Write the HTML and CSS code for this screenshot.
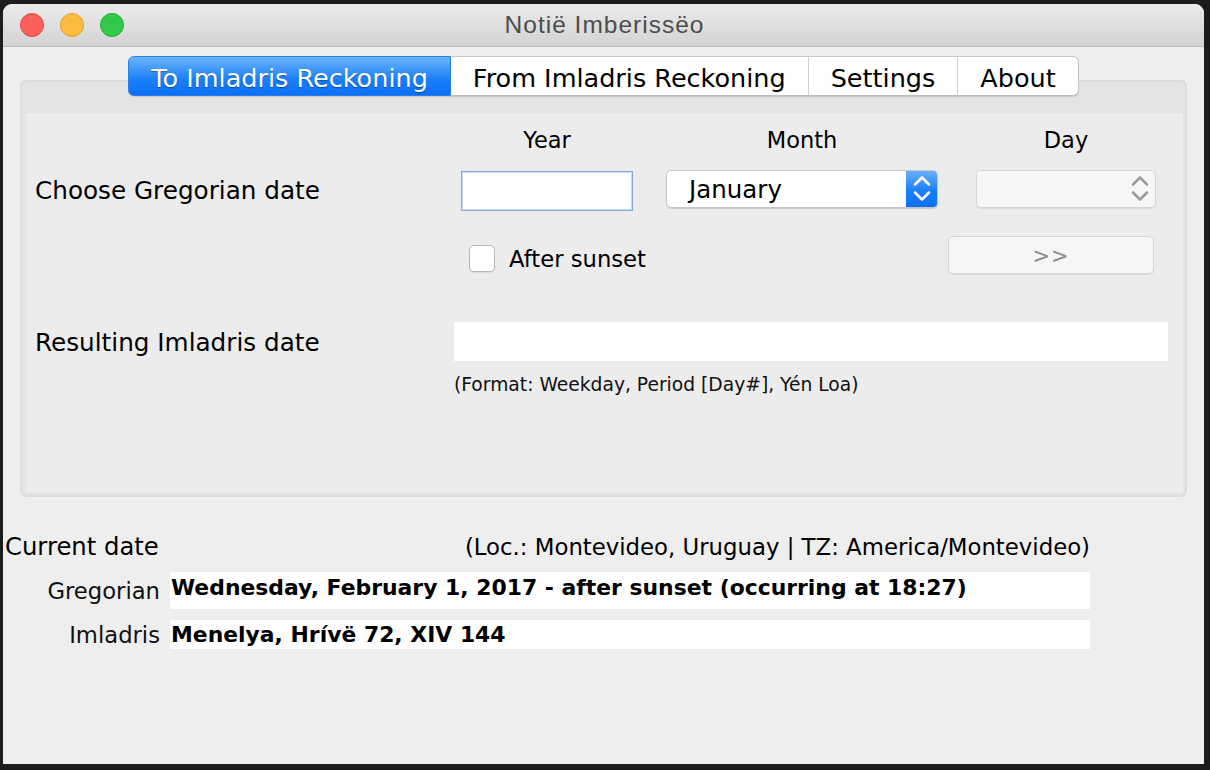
FILE: index.html
```html
<!DOCTYPE html>
<html>
<head>
<meta charset="utf-8">
<title>Notië Imberissëo</title>
<link rel="stylesheet" href="styles.css">
</head>
<body>
<div class="window">
  <div class="titlebar">
    <div class="lights">
      <span class="light red"></span>
      <span class="light yellow"></span>
      <span class="light green"></span>
    </div>
    <div class="title">Notië Imberissëo</div>
    <div></div>
  </div>

  <div class="main">
    <div class="tabs">
      <div class="tab active">To Imladris Reckoning</div>
      <div class="tab">From Imladris Reckoning</div>
      <div class="tab">Settings</div>
      <div class="tab">About</div>
    </div>

    <div class="panel">
      <div class="pane">
        <div class="grid">
          <div></div>
          <div class="head year-w">Year</div>
          <div class="head month-w">Month</div>
          <div class="head day-w">Day</div>

          <div class="label row-label">Choose Gregorian date</div>
          <div class="textfield year-w"></div>
          <div class="combo month-w">
            <span class="combo-text">January</span>
            <span class="combo-arrow blue">
              <svg width="32" height="38" viewBox="0 0 32 38"><path d="M9 14.5 L16 7.5 L23 14.5 M9 22.5 L16 29.5 L23 22.5" fill="none" stroke="#ffffff" stroke-width="2.5" stroke-linecap="round" stroke-linejoin="round"/></svg>
            </span>
          </div>
          <div class="combo day-w disabled">
            <span class="combo-arrow">
              <svg width="32" height="38" viewBox="0 0 32 38"><path d="M9 14.5 L16 7.5 L23 14.5 M9 22.5 L16 29.5 L23 22.5" fill="none" stroke="#9a9a9a" stroke-width="2.5" stroke-linecap="round" stroke-linejoin="round"/></svg>
            </span>
          </div>

          <div></div>
          <div class="check"><span class="box"></span><span>After sunset</span></div>
          <div class="btn">&gt;&gt;</div>
        </div>

        <div class="result-row">
          <div class="label result-label">Resulting Imladris date</div>
          <div class="result-field"></div>
        </div>
        <div class="format">(Format: Weekday, Period [Day#], Yén Loa)</div>
      </div>
    </div>
  </div>

  <div class="current">
    <div class="current-head">
      <span class="current-title">Current date</span>
      <span class="loc">(Loc.: Montevideo, Uruguay | TZ: America/Montevideo)</span>
    </div>
    <div class="cur-row greg">
      <span class="cur-label">Gregorian</span>
      <span class="cur-field">Wednesday, February 1, 2017 - after sunset (occurring at 18:27)</span>
    </div>
    <div class="cur-row imla">
      <span class="cur-label">Imladris</span>
      <span class="cur-field">Menelya, Hrívë 72, XIV 144</span>
    </div>
  </div>
</div>
</body>
</html>
```

FILE: styles.css
```css
* { box-sizing: border-box; }

html, body {
  margin: 0;
  padding: 0;
}

body {
  background: #1c1c1c;
  padding: 4px 0 0 3px;
  width: 1210px;
  height: 770px;
  overflow: hidden;
  font-family: "DejaVu Sans", sans-serif;
  color: #000;
}

.window {
  width: 1201px;
  height: 760px;
  background: #eeeeee;
  border-radius: 9px 9px 0 0;
  overflow: hidden;
  display: flex;
  flex-direction: column;
}

/* Title bar */
.titlebar {
  height: 43px;
  flex: none;
  background: linear-gradient(#ebebeb, #d3d3d3);
  border-bottom: 1px solid #bdbdbd;
  display: grid;
  grid-template-columns: 1fr auto 1fr;
  align-items: center;
}

.lights {
  display: flex;
  gap: 16px;
  padding-left: 17px;
}

.light {
  width: 24px;
  height: 24px;
  border-radius: 50%;
  display: block;
}
.light.red { background: #fc605c; border: 1px solid #e0443e; }
.light.yellow { background: #fdbc40; border: 1px solid #dea123; }
.light.green { background: #34c84a; border: 1px solid #1dad2b; }

.title {
  font-family: "Liberation Sans", sans-serif;
  font-size: 24.5px;
  letter-spacing: 1px;
  color: #4d4d4d;
  padding-left: 2px;
}

/* Tabs + panel */
.main {
  padding: 9px 17px 0 17px;
  flex: none;
}

.tabs {
  display: flex;
  justify-content: center;
  position: relative;
  z-index: 1;
  height: 40px;
  margin-bottom: -16px;
}

.tab {
  height: 40px;
  line-height: 38px;
  padding: 2px 22px 0;
  font-size: 25.5px;
  background: #ffffff;
  border-top: 1px solid #c9c9c9;
  border-bottom: 1px solid #bdbdbd;
  border-right: 1px solid #d4d4d4;
  box-shadow: 0 1px 1px rgba(0, 0, 0, 0.12);
  color: #000;
  white-space: nowrap;
}

.tab:last-child {
  border-right: 1px solid #c4c4c4;
  border-radius: 0 6px 6px 0;
}

.tab.active {
  background: linear-gradient(#6db4fb, #1a7ff8 60%, #0a6ff6);
  color: #ffffff;
  border: 1px solid #2a7fe6;
  border-radius: 6px 0 0 6px;
  text-shadow: 0 1px 1px rgba(0, 0, 0, 0.35);
}

.panel {
  background: #e4e4e4;
  border: 2px solid #dcdcdc;
  border-radius: 6px;
  padding: 31px 2px 2px 4px;
}

.pane {
  background: #ececec;
  height: 380px;
  padding-top: 13px;
}

.grid {
  display: grid;
  grid-template-columns: 435px 205px 310px 180px;
  grid-template-rows: 44px 66px 38px;
}

.year-w { width: 172px; }
.month-w { width: 272px; }
.day-w { width: 180px; }

.head {
  font-size: 22.5px;
  line-height: 28px;
  text-align: center;
  align-self: start;
}

.label {
  font-size: 24.7px;
  white-space: nowrap;
}

.row-label {
  padding-left: 9px;
  line-height: 41px;
  align-self: start;
}

.textfield {
  height: 40px;
  margin-top: 1px;
  background: #ffffff;
  border: 1px solid #7ea9e1;
  box-shadow: inset 0 0 0 1px #c9dcf4;
  align-self: start;
}

.combo {
  height: 38px;
  align-self: start;
  display: flex;
  align-items: center;
  background: #ffffff;
  border: 1px solid #c6c6c6;
  border-radius: 5px;
  box-shadow: 0 1px 1px rgba(0, 0, 0, 0.14);
  overflow: hidden;
}

.combo-text {
  font-size: 24.5px;
  padding-left: 22px;
}

.combo-arrow {
  margin-left: auto;
  width: 32px;
  height: 38px;
  flex: none;
  display: block;
  margin-top: -1px;
  margin-right: -1px;
}

.combo-arrow svg { display: block; }

.combo-arrow.blue {
  background: linear-gradient(#6cb2fb, #1a80f8 55%, #0a6ff6);
}

.combo.disabled {
  background: #f6f6f6;
  border-color: #d6d6d6;
  box-shadow: 0 1px 1px rgba(0, 0, 0, 0.08);
}

.check {
  display: flex;
  align-items: center;
  gap: 14px;
  padding-left: 8px;
  margin-top: 9px;
  height: 27px;
  align-self: start;
  font-size: 22.7px;
  white-space: nowrap;
}

.box {
  width: 26px;
  height: 27px;
  background: #ffffff;
  border: 1px solid #b7b7b7;
  border-radius: 5px;
  box-shadow: 0 1px 1px rgba(0, 0, 0, 0.08);
  flex: none;
}

.btn {
  grid-column: 3 / 5;
  justify-self: end;
  margin-right: 2px;
  width: 206px;
  height: 38px;
  background: #f6f6f6;
  border: 1px solid #d6d6d6;
  border-radius: 5px;
  box-shadow: 0 1px 1px rgba(0, 0, 0, 0.08);
  color: #8b8b8b;
  font-size: 21px;
  letter-spacing: 1px;
  line-height: 38px;
  text-align: center;
}

.result-row {
  display: flex;
  align-items: center;
  margin-top: 48px;
}

.result-label {
  width: 428px;
  padding-left: 9px;
  line-height: 30px;
  margin-top: 3px;
}

.result-field {
  width: 714px;
  height: 39px;
  background: #ffffff;
}

.format {
  margin-top: 13px;
  padding-left: 428px;
  font-size: 18.7px;
  line-height: 22px;
  color: #111;
}

/* Current date */
.current {
  padding: 35px 114px 0 2px;
}

.current-head {
  display: flex;
  justify-content: space-between;
  align-items: baseline;
  line-height: 30px;
}

.current-title { font-size: 24.3px; }
.loc { font-size: 22.8px; }

.cur-row {
  display: grid;
  grid-template-columns: 155px 1fr;
  column-gap: 10px;
  align-items: center;
}

.cur-row.greg { margin-top: 10px; }
.cur-row.imla { margin-top: 11px; }

.cur-label {
  text-align: right;
  font-size: 22.7px;
  color: #111;
}

.cur-field {
  background: #ffffff;
  font-weight: bold;
  font-size: 21.9px;
  padding-left: 1px;
  white-space: nowrap;
}

.greg .cur-field { height: 37px; line-height: 31px; }
.imla .cur-field { height: 29px; line-height: 29px; }
```
